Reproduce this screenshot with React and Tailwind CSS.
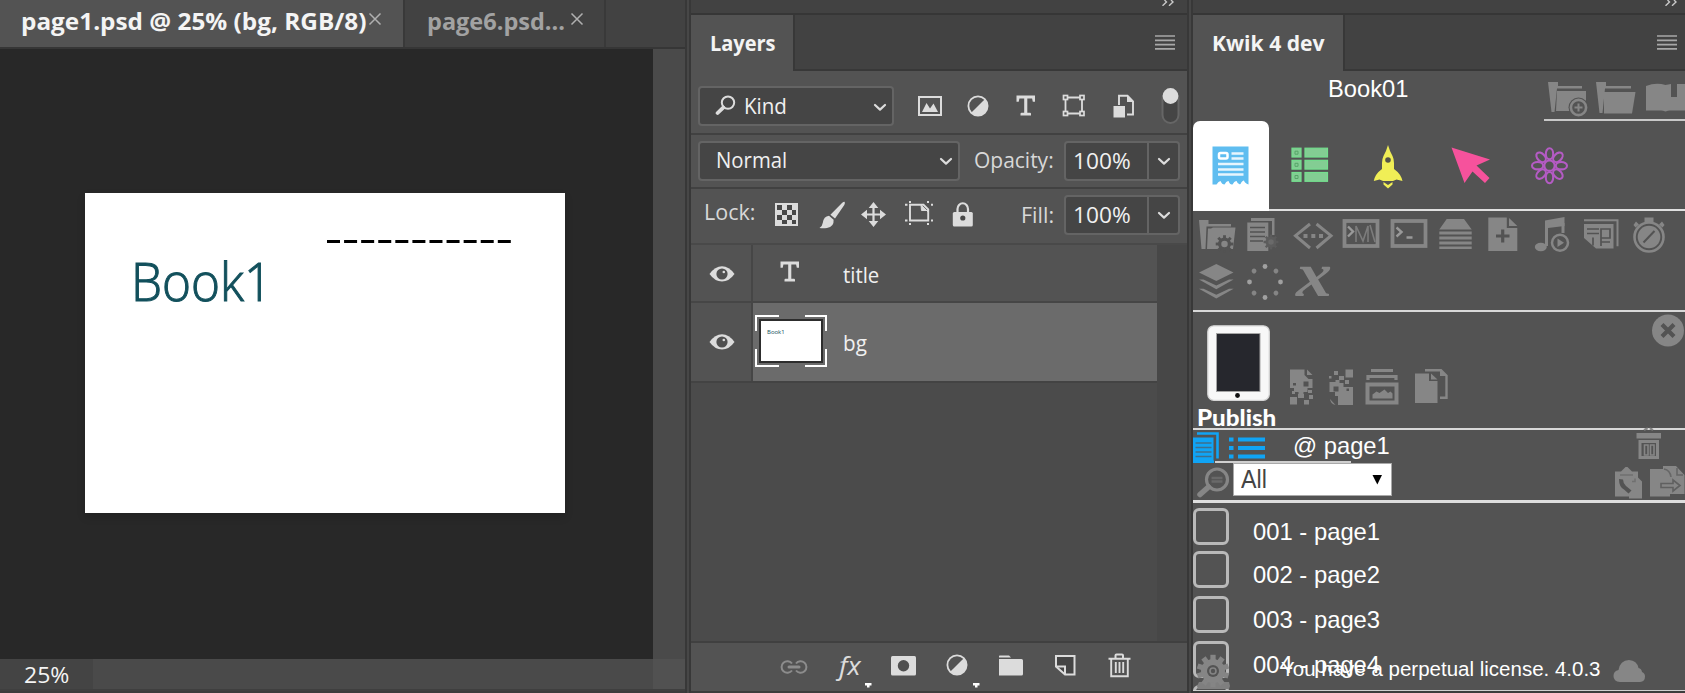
import { useLayoutEffect, useRef } from "react";

/* Text condensed or widened to a given width. */
function Fit({ w, className = "", children }) {
  const ref = useRef(null);
  useLayoutEffect(() => {
    const el = ref.current;
    el.style.transform = `scaleX(${w / el.offsetWidth})`;
  }, [w]);
  return (
    <span className={`block shrink-0 whitespace-nowrap ${className}`} style={{ width: w }}>
      <span ref={ref} className="inline-block origin-left">{children}</span>
    </span>
  );
}

function Ic({ w, h, className = "", children }) {
  return (
    <svg width={w} height={h} viewBox={`0 0 ${w} ${h}`} fill="none" className={`shrink-0 ${className}`}>
      {children}
    </svg>
  );
}

const Chevron = ({ className = "" }) => (
  <Ic w={14} h={9} className={className}>
    <path d="M2 2l5 4.6L12 2" stroke="#dcdcdc" strokeWidth="2.2" strokeLinecap="round" strokeLinejoin="round" />
  </Ic>
);

const Half = ({ className = "" }) => (
  <Ic w={22} h={22} className={className}>
    <circle cx="11" cy="11" r="9.6" stroke="#dcdcdc" strokeWidth="1.8" />
    <path d="M17.8 4.2A9.6 9.6 0 0 1 4.2 17.8z" fill="#dcdcdc" />
  </Ic>
);

const TypeT = ({ className = "" }) => (
  <Ic w={20} h={21} className={className}>
    <path d="M.5.5h18.5v6.200h-2.200l-.7-3.300H11.300v14.400h2.700q1 0 1 1v1.700H4.500v-1.700q0-1 1-1H8.200V3.400H3.400l-.7 3.300H.5z" fill="#dcdcdc" />
  </Ic>
);

const Eye = () => (
  <Ic w={26} h={18}>
    <path d="M.5 9Q6 1.200 13 1.200T25.500 9Q20 16.600 13 16.600T.5 9z" fill="#dcdcdc" />
    <circle cx="13" cy="9" r="5.600" fill="#505050" />
    <circle cx="14.800" cy="7" r="1.300" fill="#dcdcdc" />
  </Ic>
);

const Menu = ({ className = "" }) => (
  <Ic w={20} h={15} className={className}>
    <path d="M0 1h20M0 5.300h20M0 9.600h20M0 13.900h20" stroke="#a8a8a8" strokeWidth="1.700" />
  </Ic>
);

const Collapse = ({ className = "" }) => (
  <Ic w={14} h={6} className={className}>
    <path d="M1.500 5.800L5.500 2 3.500 0M8 5.800L12 2 10 0" stroke="#c8c8c8" strokeWidth="1.400" />
  </Ic>
);

const Cross = ({ className = "" }) => (
  <Ic w={14} h={14} className={className}>
    <path d="M1.500 1.500l11 11M12.500 1.500l-11 11" stroke="#b0b0b0" strokeWidth="1.500" />
  </Ic>
);

function Percent() {
  return (
    <div className="flex h-10 w-[116px] items-center rounded-[4px] border-2 border-[#646464] bg-[#454545]">
      <Fit w={58} className="ml-[7px] mt-px text-[#f0f0f0]">100%</Fit>
      <div className="ml-[16px] h-full w-[2px] shrink-0 bg-[#646464]" />
      <Chevron className="ml-[8px] mt-px" />
    </div>
  );
}

function DocumentArea() {
  return (
    <div className="flex w-[685px] shrink-0 flex-col">
      <div className="flex h-[49px] border-b-2 border-[#363636] bg-[#424242]">
        <div className="flex w-[403px] items-center bg-[#535353] pb-[5px] pl-[21px]">
          <Fit w={345} className="text-[23px] leading-[30px] font-bold text-[#f4f4f4]">page1.psd @ 25% (bg, RGB/8)</Fit>
          <Cross className="mt-[-4px] ml-[2px]" />
        </div>
        <div className="flex w-[203px] items-center border-x-2 border-[#393939] pb-[5px] pl-[22px]">
          <Fit w={138} className="text-[23px] leading-[30px] font-bold text-[#a2a2a2]">page6.psd...</Fit>
          <Cross className="mt-[-4px] ml-[5px]" />
        </div>
      </div>
      <div className="flex h-[610px]">
        <div className="w-[653px] bg-[#282828] pt-[144px] pl-[85px]">
          <div className="h-[320px] w-[480px] bg-white pt-[46px] pl-[47px] shadow-[0_4px_8px_rgba(0,0,0,0.15)]">
            <Ic w={186} h={4} className="ml-[195px]">
              <path d="M0 2.500h184" stroke="#000" strokeWidth="3" strokeDasharray="13 4.080" />
            </Ic>
            <Fit w={141} className="mt-[2px] ml-[-1px] font-['Open_Sans',sans-serif] text-[53px] leading-[72px] font-light text-[#12505c] [-webkit-text-stroke:1px_#12505c]">Book1</Fit>
          </div>
        </div>
        <div className="flex-1 bg-[#4a4a4a]" />
      </div>
      <div className="flex h-[32px] border-b-2 border-[#3f3f3f] bg-[#4a4a4a]">
        <div className="flex w-[93px] items-center bg-[#444444] pt-[2px] pl-[24px]">
          <Fit w={45} className="text-[21.500px] text-[#f4f4f4]">25%</Fit>
        </div>
        <div className="ml-auto w-[32px] bg-[#515151]" />
      </div>
      <div className="h-[2px] bg-[#3c3c3c]" />
    </div>
  );
}

function PanelHead({ title, textW, tabClass, menuClass, collapseClass }) {
  return (
    <>
      <div className="flex h-[15px] shrink-0 justify-end border-b-2 border-[#363636] bg-[#424242]">
        <Collapse className={collapseClass} />
      </div>
      <div className="flex h-[56px] shrink-0 bg-[#424242]">
        <div className={`flex items-center bg-[#535353] pl-[19px] ${tabClass}`}>
          <Fit w={textW} className="mt-[1px] text-[21.500px] font-bold text-[#f4f4f4]">{title}</Fit>
        </div>
        <div className="flex flex-1 items-start justify-end border-b-2 border-l-2 border-[#383838] pt-[20px] pr-[8px]">
          <Menu className={menuClass} />
        </div>
      </div>
    </>
  );
}

function LayersPanel() {
  return (
    <div className="flex w-[496px] shrink-0 flex-col bg-[#535353] text-[21.500px] text-[#d8d8d8]">
      <PanelHead title="Layers" textW={66} tabClass="w-[102px]" menuClass="mr-[4px]" collapseClass="mr-[12px]" />

      <div className="flex h-[64px] items-center border-b-2 border-[#414141] pt-[7px] pl-[7px]">
        <div className="flex h-10 w-[196px] items-center rounded-[4px] border-2 border-[#646464] bg-[#454545]">
          <Ic w={21} h={21} className="ml-[15px]">
            <circle cx="13" cy="7.600" r="6.200" stroke="#dcdcdc" strokeWidth="2" />
            <path d="M8.200 12.600L2.600 18" stroke="#dcdcdc" strokeWidth="3.800" strokeLinecap="round" />
          </Ic>
          <Fit w={43} className="ml-[8px] mt-px text-[#f0f0f0]">Kind</Fit>
          <Chevron className="ml-[86px] mt-[3px]" />
        </div>
        <Ic w={24} h={20} className="ml-[24px]">
          <rect x="1" y="1" width="22" height="18" stroke="#dcdcdc" strokeWidth="2" />
          <path d="M4 16L8.500 7l3.500 5.500L15.500 7.500 20 16z" fill="#dcdcdc" />
        </Ic>
        <Half className="ml-[25px]" />
        <TypeT className="ml-[27px]" />
        <Ic w={24} h={23} className="ml-[26px]">
          <path d="M4 3.500h15M4 19.500h15M3.500 4v15M20 4v15" stroke="#dcdcdc" strokeWidth="1.800" />
          <g fill="#535353" stroke="#dcdcdc" strokeWidth="1.700">
            <rect x="1.500" y="1.500" width="4" height="4" /><rect x="18" y="1.500" width="4" height="4" />
            <rect x="1.500" y="17.500" width="4" height="4" /><rect x="18" y="17.500" width="4" height="4" />
          </g>
        </Ic>
        <Ic w={22} h={24} className="ml-[27px]">
          <path d="M6 11V1.800h8.500l5.500 5.500V20.500h-6" stroke="#dcdcdc" strokeWidth="1.900" />
          <path d="M14 1v7h7z" fill="#dcdcdc" />
          <rect x=".5" y="12" width="11.500" height="11.500" fill="#dcdcdc" />
        </Ic>
        <Ic w={20} h={38} className="ml-[26px]">
          <rect x="1.500" y="4" width="16" height="32" rx="8" fill="#454545" stroke="#666" strokeWidth="2" />
          <circle cx="9.500" cy="9" r="7.900" fill="#dcdcdc" />
        </Ic>
      </div>

      <div className="flex h-[54px] items-center border-b-2 border-[#414141] pl-[7px]">
        <div className="flex h-10 w-[262px] items-center rounded-[4px] border-2 border-[#646464] bg-[#454545]">
          <Fit w={71} className="ml-[16px] mt-[-2px] text-[#f0f0f0]">Normal</Fit>
          <Chevron className="ml-[152px] mt-px" />
        </div>
        <Fit w={80} className="ml-[14px] mt-[-2px]">Opacity:</Fit>
        <div className="ml-[10px]"><Percent /></div>
      </div>

      <div className="flex h-[56px] items-center border-b-2 border-[#494949] pb-[3px] pl-[13px]">
        <Fit w={51} className="mt-[-4px]">Lock:</Fit>
        <Ic w={23} h={23} className="ml-[20px]">
          <rect width="23" height="23" fill="#dcdcdc" />
          <path d="M2 2h5v5H2zM12 2h5v5h-5zM7 7h5v5H7zM17 7h4v5h-4zM2 12h5v5H2zM12 12h5v5h-5zM7 17h5v4H7zM17 17h4v4h-4z" fill="#484848" />
        </Ic>
        <Ic w={27} h={28} className="ml-[21px]">
          <path d="M25.500.8q1 .8-.2 3.200L16 17.500l-4.600-3.800L23 2q1.800-1.600 2.500-1.200z" fill="#dcdcdc" />
          <path d="M10 14.800l4.600 4q.6 7.200-6.600 8.200-4 .6-7.500 0 2.800-1.500 3.300-5.200Q4.600 15.500 10 14.800z" fill="#dcdcdc" />
        </Ic>
        <Ic w={25} h={25} className="ml-[15px]">
          <path d="M12.500 4v17M4 12.500h17" stroke="#dcdcdc" strokeWidth="2.200" />
          <path d="M12.500 0l4.800 6H7.700zM12.500 25l-4.800-6h9.600zM0 12.500l6-4.800v9.600zM25 12.500l-6 4.800V7.700z" fill="#dcdcdc" />
        </Ic>
        <Ic w={28} h={24} className="ml-[19px] mt-[-3px]">
          <path d="M5 3.800h13.500l4.700 4.700v11H5z" stroke="#dcdcdc" strokeWidth="1.900" />
          <path d="M16 4l7 7v-1.500h-6.500z" fill="#dcdcdc" stroke="#dcdcdc" />
          <path d="M5 0v2M23 0v2M5 22v2M23 22v2M0 3.800h2.500M26 3.800h2M0 19.500h2.500M26 19.500h2" stroke="#dcdcdc" strokeWidth="2" />
        </Ic>
        <Ic w={22} h={25} className="ml-[19px] mt-[-1px]">
          <path d="M5.500 12V7a5 5.500 0 0 1 10.500 0v5" stroke="#dcdcdc" strokeWidth="2.200" />
          <rect x=".8" y="10" width="20" height="14.500" rx="1.500" fill="#dcdcdc" />
          <circle cx="10.800" cy="16" r="2.600" fill="#484848" />
        </Ic>
        <Fit w={33} className="ml-[47px] mt-px">Fill:</Fit>
        <div className="ml-[10px]"><Percent /></div>
      </div>

      <div className="flex min-h-0 flex-1 bg-[#4b4b4b]">
        <div className="w-[466px]">
          <div className="flex h-[58px] border-b-2 border-[#464646] bg-[#535353]">
            <div className="flex w-[62px] items-center justify-center border-r-2 border-[#464646] pt-px pl-px"><Eye /></div>
            <div className="flex items-center">
              <TypeT className="ml-[27px] mb-[3px]" />
              <Fit w={36} className="ml-[43px] mt-[4px] text-[#f0f0f0]">title</Fit>
            </div>
          </div>
          <div className="flex h-[80px] border-b-2 border-[#434343] bg-[#535353]">
            <div className="flex w-[62px] items-center justify-center border-r-2 border-[#464646] pl-px"><Eye /></div>
            <div className="flex flex-1 items-center bg-[#6b6b6b]">
              <div className="relative mt-[-2px] ml-[2px] h-[52px] w-[72px]">
                <Ic w={72} h={52}>
                  <path d="M1 16V1h23M50 1h21v15M71 34v17H50M24 51H1V34" stroke="#fff" strokeWidth="2" />
                  <rect x="5" y="5" width="62" height="42" fill="#fff" stroke="#2d2d2d" strokeWidth="2" />
                </Ic>
                <span className="absolute top-[13px] left-[12px] block text-[6px] leading-[8px] text-[#12505c]">Book1</span>
              </div>
              <Fit w={24} className="ml-[16px] mt-[2px] text-[#f0f0f0]">bg</Fit>
            </div>
          </div>
        </div>
        <div className="flex-1 bg-[#474747]" />
      </div>

      <div className="flex h-[50px] items-start border-t-2 border-[#404040] bg-[#535353] pt-[11px] pl-[89px]">
        <Ic w={28} h={14} className="mt-[6px]">
          <path d="M12 3.500A5.800 5.800 0 1 0 12 10.500M16 3.500a5.800 5.800 0 1 1 0 7" stroke="#8c8c8c" strokeWidth="2" />
          <path d="M9 7h10" stroke="#8c8c8c" strokeWidth="3" strokeLinecap="round" />
        </Ic>
        <Fit w={22} className="ml-[31px] mt-[-3px] text-[25px] leading-[28px] text-[#dcdcdc] italic">fx</Fit>
        <Ic w={7} h={5} className="ml-[4px] mt-[29px]"><path d="M0 0h6.500v2.500H4.500V4.500h-2.500V2.500H0z" fill="#fff" /></Ic>
        <Ic w={25} h={20} className="ml-[19px] mt-[2px]">
          <rect width="25" height="19.500" rx="1.500" fill="#dcdcdc" />
          <circle cx="12.500" cy="9.800" r="5.700" fill="#505050" />
        </Ic>
        <Half className="ml-[30px]" />
        <Ic w={7} h={5} className="ml-[5px] mt-[29px]"><path d="M0 0h6.500v2.500H4.500V4.500h-2.500V2.500H0z" fill="#fff" /></Ic>
        <Ic w={24} h={21} className="ml-[19px] mt-[1px]">
          <path d="M0 1.200q0-.7.700-.7H10l2 2H0zM0 4h22.500q1.500 0 1.500 1.500V19q0 1.500-1.500 1.500H0z" fill="#dcdcdc" />
        </Ic>
        <Ic w={21} h={21} className="ml-[32px] mt-[1px]">
          <path d="M1 1h18.500v18.500H10L1 11.500z" fill="#454545" stroke="#dcdcdc" strokeWidth="2" />
          <path d="M1 11.500h9v8.500" stroke="#dcdcdc" strokeWidth="2" />
        </Ic>
        <Ic w={23} h={25} className="ml-[32px] mt-[-1px]">
          <path d="M.5 5.800h22M7.500 5V2.500q0-1 1-1h5.500q1 0 1 1V5" stroke="#dcdcdc" strokeWidth="2" />
          <path d="M3.200 6v17.300h16.600V6M7.800 9v11M11.500 9v11M15.200 9v11" stroke="#dcdcdc" strokeWidth="1.900" />
        </Ic>
      </div>
      <div className="h-[2px] shrink-0 bg-[#3c3c3c]" />
    </div>
  );
}

const G = "#868686";
const D = "#535353";

function Gear({ cx, cy, r, color, hole = D, teeth = 8 }) {
  return (
    <g>
      {Array.from({ length: teeth }, (_, i) => (
        <rect key={i} x={cx - r * 0.22} y={cy - r * 1.35} width={r * 0.44} height={r} fill={color} transform={`rotate(${(i * 360) / teeth} ${cx} ${cy})`} />
      ))}
      <circle cx={cx} cy={cy} r={r} fill={color} />
      <circle cx={cx} cy={cy} r={r * 0.5} fill={hole} />
    </g>
  );
}

function Tool({ children }) {
  return <Ic w={48} h={47}>{children}</Ic>;
}

function Toolbox() {
  return (
    <div className="flex h-[99px] flex-wrap content-start pt-[2px] pl-[2px]">
      <Tool>
        <path d="M4 7h9.500v4H36v2.500H11.500L10.500 36H6.500z" fill={G} />
        <path d="M13 15.500h3l2-1h22.500L38 36H12z" fill={G} />
        <Gear cx={29.500} cy={31} r={6.500} color={D} hole={G} />
      </Tool>
      <Tool>
        <path d="M8 5h23.500v17H29V8H8z" fill={G} />
        <path d="M4.300 9.500h21V38h-21z" fill={G} />
        <path d="M7 14.500h15M7 19h15M7 23.500h15M7 28h13" stroke={D} strokeWidth="1.500" />
        <Gear cx={28} cy={29} r={5.500} color="#5c5c5c" hole="#6a6a6a" />
      </Tool>
      <Tool>
        <path d="M19 11L4.500 22.700 19 35M25.500 11L40 22.700 25.500 35" stroke={G} strokeWidth="3" />
        <path d="M12.500 21h4v4h-4zM20.300 21h4v4h-4zM28 21h4v4h-4z" fill={G} />
      </Tool>
      <Tool>
        <rect x="5.500" y="8" width="33" height="25" stroke={G} strokeWidth="3.800" />
        <path d="M9 13.500l5 5-5 5" stroke="#999" strokeWidth="2.400" />
        <path d="M17 29V13l7 15 5-15v16M31 12l5 17" stroke="#7c7c7c" strokeWidth="1.600" />
      </Tool>
      <Tool>
        <rect x="5.500" y="8" width="33" height="25" stroke={G} strokeWidth="3.800" />
        <path d="M9.500 14.500l5 4.500-5 4.500M19.500 24.500h6" stroke="#999" strokeWidth="2.400" />
      </Tool>
      <Tool>
        <path d="M11.700 6H29l7.700 10.500H4.300zM4.300 18.500h32.400v3H4.300zM4.300 23.500h32.400v3H4.300zM4.300 28.500h32.400v3H4.300zM4.300 33.500h32.400v2.500H4.300z" fill={G} />
      </Tool>
      <Tool>
        <path d="M5.300 4.500h18.500v10.500h10.500v23h-29zM26 5l8.300 8H26z" fill={G} />
        <path d="M19.700 16.500v13M13 23h13.500" stroke={D} strokeWidth="3.200" />
      </Tool>
      <Tool>
        <path d="M14 7.500L33.500 4v9L17 15v18h-3z" fill={G} />
        <path d="M32 10v10" stroke={G} strokeWidth="3" />
        <ellipse cx="9.800" cy="34" rx="6" ry="4.200" fill={G} />
        <circle cx="29" cy="29.700" r="8" fill={D} stroke={G} strokeWidth="2.500" />
        <path d="M26.500 25.500l6.500 4.200-6.500 4.200z" fill={G} />
      </Tool>
      <Tool>
        <path d="M5 7.200h33.500v26" stroke={G} strokeWidth="2" />
        <path d="M5 11h29.500v24.500H17L5 25z" fill={G} />
        <path d="M8 16h12M8 20.500h12M22 33V16h9v9h-9M14 24.500v8M22 29h9" stroke={D} strokeWidth="1.700" />
      </Tool>
      <Tool>
        <circle cx="22" cy="24" r="14.500" stroke={G} strokeWidth="2.600" />
        <circle cx="22" cy="24" r="11.300" fill={G} />
        <path d="M27.500 18l-11 11.500" stroke={D} strokeWidth="2" />
        <path d="M17.500 4.500h9v4.500h-9zM9 8.500l3 3-3.500 3-2-2.500zM35 8.500l-3 3 3.500 3 2-2.500z" fill={G} />
      </Tool>
      <Tool>
        <path d="M21.300 4L38.500 12.500 21.300 21 4 12.500zM4 19.500h4.500l12.800 6 12.800-6h4.500l-17.300 9.700zM4 28.800h4.500l12.800 6 12.800-6h4.500l-17.300 9.700z" fill={G} />
      </Tool>
      <Tool>
        {[0, 45, 90, 135, 180, 225, 270, 315].map((a) => (
          <circle key={a} cx="22" cy="6.500" r="2.400" fill={a % 90 ? "#858585" : "#a0a0a0"} transform={`rotate(${a} 22 22)`} />
        ))}
      </Tool>
      <div className="h-[47px] w-12">
        <Fit w={36} className="ml-[5px] mt-[-15px] font-['Liberation_Serif',serif] text-[64px] leading-[60px] font-bold text-[#868686] italic">x</Fit>
      </div>
    </div>
  );
}

function KindTabs() {
  return (
    <div className="flex h-[90px] items-start border-b-2 border-[#e0e0e0]">
      <div className="h-[90px] w-[76px] rounded-t-[7px] bg-white pt-[25px] pl-[19px]">
        <Ic w={37} h={40}>
          <path d="M.5.5h36v38q-4-1.500-4.500-4-2 0-3.500 3.500-2.500 1-4-3-2-.5-4 3.500-2.500.5-4-3.500-2-.5-4 3.500-2.500 0-4-3.500-2 0-4 3.500h-4z" fill="#5fbdf0" />
          <path d="M19.500 7.500h12M19.500 12.500h12M6 18h25.500M6 23.500h25.500M6 28.500h25.500" stroke="#fff" strokeOpacity=".85" strokeWidth="2.400" />
          <rect x="7" y="7" width="8.500" height="5.500" rx="1.500" stroke="#fff" strokeWidth="2.500" />
        </Ic>
      </div>
      <Ic w={38} h={36} className="ml-[22px] mt-[26px]">
        <g fill="#83cd93" stroke="#74df8e" strokeWidth="1.200">
          {[1.200, 13.300, 25.500].map((y) => (
            <g key={y}><rect x="1" y={y} width="9" height="8.800" /><rect x="14" y={y} width="22.500" height="8.800" /></g>
          ))}
        </g>
        <path d="M4 4.200h3v3h-3zM4 16.300h3v3h-3zM4 28.500h3v3h-3z" stroke="#56a568" strokeWidth="1" />
      </Ic>
      <Ic w={30} h={45} className="ml-[44px] mt-[23px]">
        <path d="M15 1q2 7 4.500 11 1.500 3 1.500 7v6q7 5 8.500 12l-6-1.500-3.500 1.500H10l-3.500-1.500L.8 37Q2 30 9 25v-6q0-4 1.500-7Q13 8 15 1z" fill="#f0ee56" />
        <path d="M10.500 38l4.500 3 4.500-3v2.500L15 44.500l-4.500-4z" fill="#f0ee56" />
        <circle cx="15" cy="16" r="2.800" fill="#53534a" />
      </Ic>
      <Ic w={39} h={37} className="ml-[48px] mt-[26px]">
        <path d="M.5.5L39 12.500l-13.500 6L38.500 31l-4.500 5L21.500 24.500 13.500 36z" fill="#f6529c" />
      </Ic>
      <Ic w={40} h={38} className="ml-[40px] mt-[26px]">
        <g stroke="#b45bc4" strokeWidth="2.100">
          {[0, 45, 90, 135, 180, 225, 270, 315].map((a) => (
            <ellipse key={a} cx="19.500" cy="6.800" rx="3.700" ry="5.600" transform={`rotate(${a} 19.500 18.700)`} />
          ))}
          <circle cx="19.500" cy="18.700" r="5.200" />
        </g>
      </Ic>
    </div>
  );
}

function PublishRow() {
  return (
    <div className="flex h-[118px] items-start border-b-2 border-[#d8d8d8]">
      <div className="w-[96px] shrink-0 pt-[13px]">
        <Ic w={64} h={76} className="ml-[14px]">
          <rect x=".8" y=".8" width="61.500" height="74.500" rx="6" fill="#f8f8f8" stroke="#d5d5d5" strokeWidth="1.300" />
          <rect x="9.500" y="8.500" width="43.500" height="58" fill="#26272d" stroke="#a5a5a5" strokeWidth="1" />
          <circle cx="30.500" cy="70.500" r="2.400" fill="#111" />
        </Ic>
        <Fit w={79} className="ml-[4px] mt-[5px] font-['Lato',sans-serif] text-[23.500px] leading-[22px] font-black text-white">Publish</Fit>
      </div>
      <Ic w={27} h={37} className="mt-[56px]">
        <path d="M1 1.500h14.500v5.500l4 4h4v9h-5v4h-4v3h-5v-3H5v-4H1zM18 1.500l5.500 5.500H18zM1 29h7v7.500H1zM3 23h3v3H3zM9 26h6v4H9zM15 32h5v4.500h-5zM20 27h4v4h-4zM19 22h4v3h-4z" fill={G} />
        <path d="M14.500 13.500h5v5h-5zM4 15h3v2.500H4z" fill={D} />
      </Ic>
      <Ic w={26} h={38} className="ml-[12px] mt-[56px]">
        <path d="M17.500 1.500h7.500v8h-7.500zM6 3h4v4H6zM11 8h5v4h-5zM1 8h2.500v2.500H1zM17 12h4v4h-4zM1.500 14h6v-2h4v3h4v4h9.500v18H10v-9H7v-4H1.500zM2 31l5.500 6Q2.500 36 2 31z" fill={G} />
        <path d="M5.500 18.500h5v5h-5zM18.500 20.500h2.500v2.500h-2.500z" fill={D} />
      </Ic>
      <Ic w={34} h={38} className="ml-[11px] mt-[56px]">
        <path d="M6 2.500h22M3 12V8.500h28V12" stroke={G} strokeWidth="3.200" />
        <rect x="2.500" y="16.500" width="29" height="18" stroke={G} strokeWidth="4" />
        <path d="M7.500 30.500v-4l4-3 3 1.500 5-3.500 3.500 3.500 2.500-1.500 2 2v5z" fill={G} />
      </Ic>
      <Ic w={35} h={38} className="ml-[15px] mt-[56px]">
        <path d="M11 2.200h16l5.500 5.500v22H26" stroke={G} strokeWidth="2.400" />
        <path d="M1 5.500h14v7.500h8.500v22H1zM17 5.500l6.500 6H17z" fill={G} />
        <path d="M26 1l7.500 7H26z" fill={G} />
      </Ic>
      <Ic w={34} h={34} className="ml-[202px] mt-[2px]">
        <circle cx="17" cy="16.500" r="16" fill={G} />
        <path d="M11 10.500l12 12M23 10.500l-12 12" stroke={D} strokeWidth="4.200" />
      </Ic>
    </div>
  );
}

function PageFilter() {
  return (
    <div className="flex h-[73px] items-start justify-between border-b-[3px] border-[#dedede]">
      <div className="flex flex-col">
        <div className="flex h-[33px] items-start">
          <Ic w={27} h={32} className="mt-[1px]">
            <path d="M4 2.500h20.500v25" stroke="#10a4f5" strokeWidth="2.600" />
            <path d="M0 6.500h20.500v23H21V32H0z" fill="#10a4f5" />
            <path d="M2.500 12h16M2.500 16.500h16M2.500 21h16M2.500 25.500h16" stroke="#3f6f8c" strokeWidth="1.500" />
          </Ic>
          <div className="-ml-[5px] flex h-[33px] w-[136px] border-b-2 border-[#cfcfcf]">
            <Ic w={37} h={24} className="ml-[14px] mt-[6px]">
              <path d="M0 1.500h4.500v4H0zM9 1.500h27v4H9zM0 10h4.500v4H0zM9 10h27v4H9zM0 18.500h4.500v4H0zM9 18.500h27v4H9z" fill="#10a4f5" />
            </Ic>
            <Fit w={97} className="ml-[27px] mt-[2px] font-['Liberation_Sans',sans-serif] text-[24px] leading-[28px] text-white">@ page1</Fit>
          </div>
        </div>
        <div className="flex items-start">
          <Ic w={35} h={32} className="ml-[3px] mt-[3px]">
            <circle cx="21" cy="13.500" r="10.500" stroke={G} strokeWidth="3.200" />
            <path d="M12.500 21L4 28.500" stroke={G} strokeWidth="5.500" strokeLinecap="round" />
            <path d="M15.500 12h11M15.500 15.500h11" stroke="#696969" strokeWidth="2.400" />
          </Ic>
          <div className="ml-[2px] flex h-[33px] w-[159px] items-start border border-[#a9a9a9] bg-white font-['Liberation_Sans',sans-serif]">
            <Fit w={26} className="ml-[7px] text-[25px] leading-[30px] text-[#444]">All</Fit>
            <Ic w={11} h={10} className="ml-[105px] mt-[11px]"><path d="M.5 0h9.500L5.300 9.500z" fill="#000" /></Ic>
          </div>
        </div>
      </div>
      <div className="flex w-[71px] flex-col">
        <Ic w={26} h={34} className="-mt-[3px] ml-[22px]">
          <path d="M8 3Q12.500 0 17 3" stroke={G} strokeWidth="2" strokeDasharray="4 2" />
          <path d="M.5 6h24.500v5.500H.5z" fill={G} />
          <path d="M4 14.500h17.500v16H4z" stroke={G} strokeWidth="3" />
          <path d="M8.500 18h3.500v10H8.500zM14.500 18H18v10h-3.500z" stroke={G} strokeWidth="1.600" />
        </Ic>
        <div className="flex items-start pt-[5px]">
          <Ic w={29} h={34}>
            <path d="M1 5.500h6l2-2 2.500-2.500h2L16 3.500l2 2h6v6l4 4v17H15v-2H1z" fill={G} />
            <path d="M5 13q0 8 5 10.500l4.500 4 3-3L12 20q-3-3-3-6.500z" fill={D} />
            <path d="M18 15.500h3v-3M6 9h13" stroke="#707070" strokeWidth="1.500" />
          </Ic>
          <Ic w={36} h={34} className="ml-[7px]">
            <path d="M0 3h13V0h13l8.500 9v19H20v2.500H0z" fill={G} />
            <path d="M14 3q6 1 7 8M27 2v7h6" stroke="#666" strokeWidth="1.600" />
            <path d="M11 17.500h12V14l7 5.500-7 5.500v-3.500H11z" fill={G} stroke="#606060" strokeWidth="1.600" />
          </Ic>
        </div>
      </div>
    </div>
  );
}

const pages = [
  { name: "001 - page1", h: "h-[43px]" },
  { name: "002 - page2", h: "h-[45px]" },
  { name: "003 - page3", h: "h-[45px]" },
  { name: "004 - page4", h: "h-[44px]" },
  { name: "", h: "h-[36px]" },
];

function KwikPanel() {
  return (
    <div className="flex h-[693px] w-[492px] flex-col bg-[#535353]">
      <PanelHead title="Kwik 4 dev" textW={113} tabClass="w-[150px]" menuClass="mr-0" collapseClass="mr-[7px]" />
      <div className="flex h-[50px] items-start">
        <Fit w={80} className="ml-[135px] mt-[4px] font-['Liberation_Sans',sans-serif] text-[24px] leading-[28px] text-white">Book01</Fit>
        <div className="ml-[136px] flex h-[50px] flex-1 border-b-2 border-[#c8c8c8] pt-[11px] pl-[4px]">
          <Ic w={41} h={36}>
            <path d="M0 0h10v4h24v2.500H9L6.500 30H3.500z" fill={G} />
            <path d="M9 9h29v20H8z" fill={G} />
            <circle cx="30.500" cy="25.500" r="10" fill={D} />
            <circle cx="30.500" cy="25.500" r="7.600" stroke={G} strokeWidth="2.600" />
            <path d="M30.500 21.500v8M26.500 25.500h8" stroke={G} strokeWidth="2" />
          </Ic>
          <Ic w={42} h={36} className="ml-[7px]">
            <path d="M0 0h10v4h25v2.500H9L6.500 31H3.500z" fill={G} />
            <path d="M8 13V10H39.500L36 31.500H8z" fill={G} />
          </Ic>
          <Ic w={41} h={36} className="ml-[8px]">
            <path d="M0 4Q10 0 19.500 3L25 2v13h6V2h8v26.500H24q-2 0-4.500 1Q17 28.500 15 28.500H0z" fill={G} />
          </Ic>
        </div>
      </div>
      <KindTabs />
      <Toolbox />
      <div className="h-[2px] shrink-0 bg-[#d8d8d8]" />
      <PublishRow />
      <PageFilter />
      <div className="relative h-[188px] overflow-hidden border-b border-[#cfcfcf] pt-[5px] font-['Liberation_Sans',sans-serif] text-white">
        {pages.map((p) => (
          <div key={p.h + p.name} className={`flex items-start ${p.h}`}>
            <div className="h-[37px] w-[36px] shrink-0 rounded-[6px] border-[3px] border-[#b9b9b9]" />
            {p.name && <Fit w={127} className="ml-[24px] mt-[10px] text-[24px] leading-[28px]">{p.name}</Fit>}
          </div>
        ))}
        <div className="absolute inset-x-0 bottom-0 flex h-[36px] items-start">
          <Ic w={36} h={36} className="ml-[2px]">
            <path d="M4 28h30l1 4-1 3H3l-1-3z" fill="#7f7f7f" />
            <Gear cx={18} cy={17} r={12} color="#858585" teeth={10} />
            <circle cx="18" cy="17" r="3" stroke="#858585" strokeWidth="1.600" />
          </Ic>
          <Fit w={320} className="ml-[50px] mt-[3px] text-[20.500px] leading-[24px]">You have a perpetual license. 4.0.3</Fit>
          <Ic w={33} h={25} className="ml-[12px] mt-[5px]">
            <path d="M7 23q-6.500-.5-6.500-6 0-5 5-6Q7 1.500 16 1q8 .5 9.500 8 3 .5 3.500 4 3 1 3 4.500 0 5-5 5.500z" fill={G} />
          </Ic>
        </div>
      </div>
      <div className="h-[2px] shrink-0 bg-[#3c3c3c]" />
    </div>
  );
}

function Gutter() {
  return <div className="h-full w-[6px] shrink-0 border-x-2 border-[#383838] bg-[#474747]" />;
}

export default function App() {
  return (
    <div className="flex h-[693px] w-[1685px] overflow-hidden bg-[#535353] font-['Open_Sans',sans-serif]">
      <DocumentArea />
      <Gutter />
      <LayersPanel />
      <Gutter />
      <KwikPanel />
    </div>
  );
}
